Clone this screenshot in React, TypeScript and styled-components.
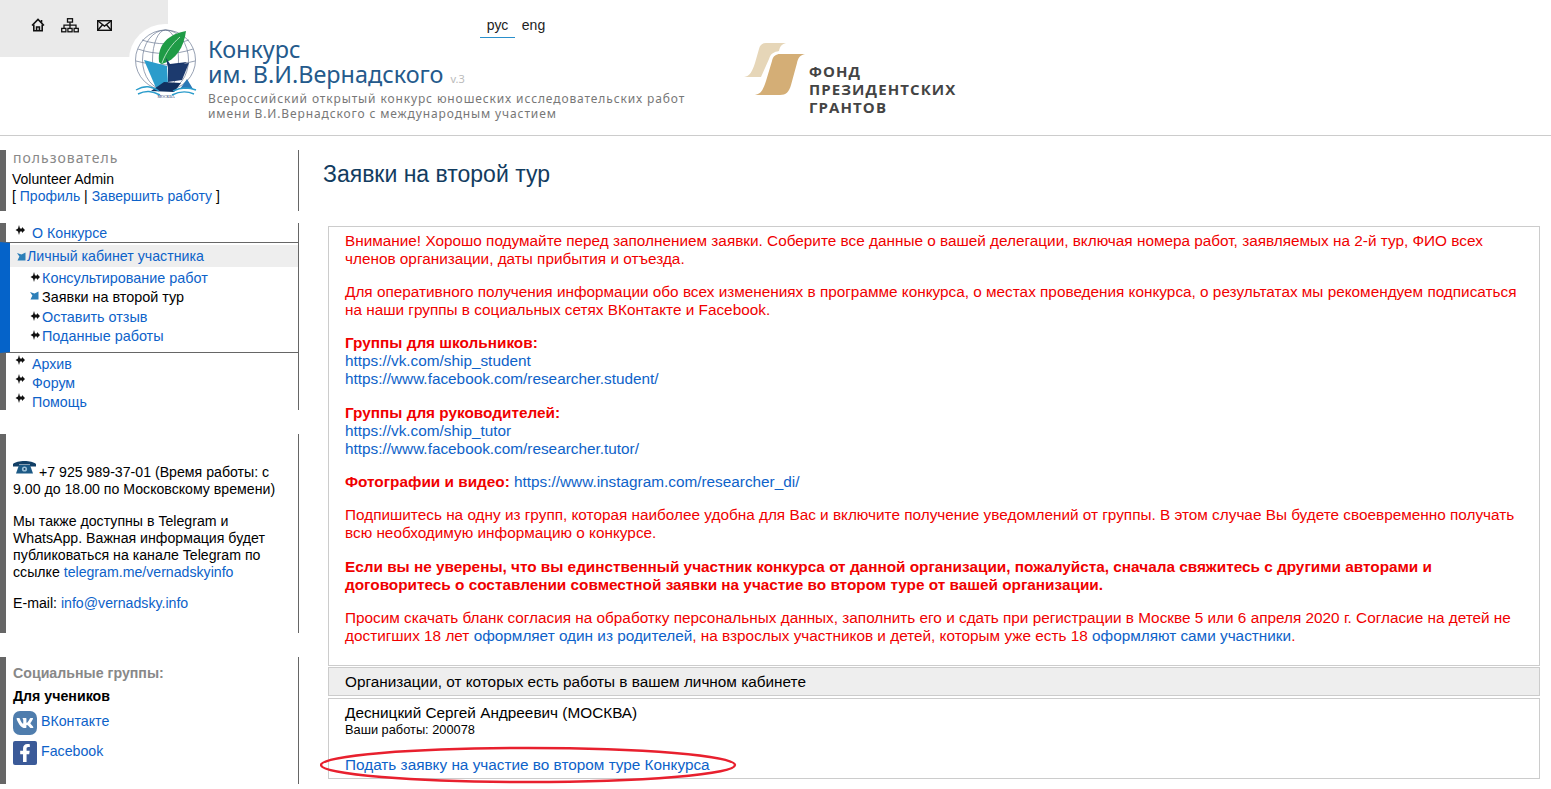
import React from 'react';
import styled, { createGlobalStyle } from 'styled-components';
import { FaVk, FaFacebookF } from 'react-icons/fa';

const link = '#0d62c9';

const GlobalStyle = createGlobalStyle`
  html, body {
    margin: 0;
    padding: 0;
    background: #fff;
    height: 789px;
    overflow: hidden;
    font-family: "Liberation Sans", Arial, sans-serif;
    color: #000;
  }
  a {
    color: ${link};
    text-decoration: none;
  }
`;

const HomeIcon = () => (
  <svg width="14" height="14" viewBox="0 0 14 14" fill="none" stroke="#111" strokeWidth="1.6">
    <path d="M1 7.5 7 1.5l6 6" />
    <path d="M2.8 6.5v6.3h8.4V6.5" />
    <path d="M5.6 12.8V9h2.8v3.8" />
    <path d="M10.5 2v2.6" />
  </svg>
);

const SitemapIcon = () => (
  <svg width="18" height="15" viewBox="0 0 18 15" fill="none" stroke="#111" strokeWidth="1.3">
    <rect x="6.5" y="0.7" width="5" height="3.4" />
    <path d="M9 4.2v3M3 10V7.2h12V10M9 7.2V10" />
    <rect x="0.7" y="10.4" width="4.2" height="3.4" />
    <rect x="6.9" y="10.4" width="4.2" height="3.4" />
    <rect x="13.1" y="10.4" width="4.2" height="3.4" />
  </svg>
);

const MailSvg = styled.svg`
  margin-left: 2px;
`;

const MailIcon = () => (
  <MailSvg width="15" height="11" viewBox="0 0 15 11" fill="none" stroke="#111" strokeWidth="1.4">
    <rect x="0.7" y="0.7" width="13.6" height="9.6" />
    <path d="M1 1l6.5 5L14 1M1 10l4.5-5.2M14 10 9.5 4.8" />
  </MailSvg>
);

const Logo = () => (
  <svg width="66" height="70" viewBox="0 0 66 70">
    <g fill="none" stroke="#6a7892" strokeWidth="0.7">
      <circle cx="31.5" cy="31" r="30" />
      <ellipse cx="31.5" cy="31" rx="13" ry="30" />
      <ellipse cx="31.5" cy="31" rx="23" ry="30" />
      <path d="M4 20c16 6 39 6 55 0M2 32c18 5 41 5 59 0M8 11c14 5 33 5 47 0" />
    </g>
    <path d="M52 2C35 5 23 15 25 33c1 1 2 2 3 2C42 31 50 18 52 2Z" fill="#1f9b46" />
    <path d="M46 8C38 15 32 23 28 34" stroke="#d6f0dc" strokeWidth="0.8" fill="none" />
    <path d="M32 29l4 6 17-2-5 3-14 3Z" fill="#17356a" />
    <path d="M10 31l23 6 1 18-12 4Z" fill="#2b9ccb" />
    <path d="M34 37l21-3-7 17-14 2Z" fill="#1c3a6e" />
    <path d="M17 62l13-9 17 1-7 9Z" fill="#12305f" />
    <path d="M53 50l6 10H46Z" fill="#2b78b5" />
    <path d="M2 61c9-5 15-4 23 1M39 62c8-4 15-4 23-1M4 65c8-4 14-3 22 1M38 66c8-4 15-4 22-1" stroke="#2b9ccb" strokeWidth="1.4" fill="none" />
    <text x="32" y="69" fontSize="4" textAnchor="middle" fill="#17356a" fontFamily="Liberation Serif, serif">
      МОСКВА
    </text>
  </svg>
);

const GrantsMark = () => (
  <svg width="62" height="54" viewBox="0 0 62 54">
    <path d="M0 34C6 33 8 29 11 20L15 6C16 2 18 0 22 0H42C38 1 36 3 35 8C30 9 27 10 25 16L17 34Z" fill="#e6d6b8" />
    <path d="M11 52C17 51 19 47 22 38L28 18C29 13 32 11 36 11H61C56 12 54 15 53 20L47 42C45 49 42 52 36 52Z" fill="#d4ae76" />
  </svg>
);

const Bullet = () => (
  <svg width="10" height="10" viewBox="0 0 10 10">
    <path d="M4 0 5 3.4H7V2L10 5 7 8V6.6H5L4 10 3 6.6 0.5 5 3 3.4Z" fill="#111" />
  </svg>
);

const OpenBullet = () => (
  <svg width="9" height="9" viewBox="0 0 9 9">
    <path d="M0 1 4.5 2.4 8.5 0.5V8.5H0.5L2.4 4.6Z" fill="#2d7fb8" />
  </svg>
);

const PhoneIcon = () => (
  <svg width="23" height="14" viewBox="0 0 23 14">
    <path d="M0 4C4 0 19 0 23 4V6.5H17V4.5H6V6.5H0Z" fill="#123f66" />
    <path d="M6 5H17L20 13.5H3Z" fill="#1d5a86" />
    <circle cx="11.5" cy="9" r="2.6" fill="#9cc0d8" />
    <circle cx="11.5" cy="9" r="1" fill="#123f66" />
  </svg>
);

const Page = styled.div`
  width: 1551px;
  height: 789px;
  overflow: hidden;
`;

const Header = styled.header`
  display: flex;
  height: 135px;
  border-bottom: 1px solid #ccc;
`;

const Toolbar = styled.div`
  display: flex;
  flex: none;
  align-items: center;
  gap: 16px;
  width: 168px;
  height: 57px;
  padding: 0 0 7px 31px;
  box-sizing: border-box;
  background: #eaeaea;
`;

const LogoBadge = styled.div`
  flex: none;
  width: 74px;
  height: 76px;
  margin: 24px 0 0 -39px;
  padding: 5px 0 0 5px;
  box-sizing: border-box;
  background: #fff;
  border-radius: 36px 0 0 0;
`;

const Brand = styled.div`
  flex: none;
  width: 272px;
  padding-top: 37px;
  margin-left: 5px;
`;

const BrandName = styled.div`
  font-family: "Noto Sans", sans-serif;
  font-size: 23.4px;
  line-height: 25px;
  color: #245a8c;
  white-space: nowrap;
`;

const Version = styled.span`
  margin-left: 7px;
  font-size: 11px;
  color: #bbb;
`;

const Tagline = styled.div`
  margin-top: 0;
  font-family: "Noto Sans", sans-serif;
  font-size: 12px;
  line-height: 15px;
  letter-spacing: 0.88px;
  color: #777;
  white-space: nowrap;
`;

const Langs = styled.nav`
  display: flex;
  flex: none;
  align-self: flex-start;
  gap: 1px;
  margin: 14px 0 0 0;
  font-size: 14px;
`;

const Lang = styled.span<{ $active?: boolean }>`
  width: 35px;
  height: 23px;
  line-height: 22px;
  text-align: center;
  color: #222;
  border-bottom: 1px solid ${p => (p.$active ? '#2a8fcb' : 'transparent')};
`;

const Grants = styled.div`
  display: flex;
  flex: none;
  margin: 43px 0 0 193px;
`;

const GrantsName = styled.div`
  margin: 19px 0 0 3px;
  font-family: "Open Sans", sans-serif;
  font-size: 15px;
  font-weight: 700;
  line-height: 18px;
  letter-spacing: 1.1px;
  color: #444;
`;

const Body = styled.div`
  display: flex;
`;

const Sidebar = styled.aside`
  flex: none;
  display: flex;
  flex-direction: column;
  gap: 12px;
  width: 299px;
  padding-top: 14px;
  font-size: 14.2px;
`;

const Block = styled.section`
  box-sizing: border-box;
  border-left: 6px solid #666;
  border-right: 1px solid #666;
`;

const UserBlock = styled(Block)`
  height: 61px;
  padding: 0 0 0 6px;
  font-size: 14px;
  line-height: 17px;
`;

const BlockTitle = styled.div`
  padding: 0 0 6px 1px;
  font-family: "Noto Sans", sans-serif;
  font-size: 14px;
  line-height: 15px;
  letter-spacing: 1px;
  color: #888;
`;

const Menu = styled.nav`
  width: 299px;
  box-sizing: border-box;
`;

const TopItems = styled(Block)`
  height: 19px;
  padding: 0 0 0 9px;
  line-height: 20px;
`;

const LowerItems = styled(Block)`
  height: 57px;
  padding: 3px 0 0 9px;
`;

const Item = styled.div`
  display: flex;
  align-items: flex-start;
  height: 19px;
  line-height: inherit;
  gap: 7px;
`;

const BulletSlot = styled.span<{ $nudge?: number }>`
  display: flex;
  flex: none;
  width: 10px;
  margin-top: ${p => p.$nudge ?? 2}px;
`;

const OpenGroup = styled.div`
  border-top: 1px solid #666;
  border-bottom: 1px solid #666;
  border-right: 1px solid #666;
  border-left: 10px solid #0563c9;
  padding: 2px 0 0 0;
  height: 111px;
  box-sizing: border-box;
`;

const OpenHead = styled.div`
  display: flex;
  align-items: center;
  gap: 1px;
  height: 22px;
  padding-left: 7px;
  background: #eeeeee;
`;

const SubItems = styled.div`
  padding: 2px 0 0 20px;
  font-size: 14.4px;
  line-height: 19px;
`;

const SubItem = styled(Item)<{ $tall?: boolean }>`
  gap: 2px;
  height: ${p => (p.$tall ? 20 : 19)}px;
`;

const ContactBlock = styled(Block)`
  height: 199px;
  margin-top: 12px;
  padding: 26px 8px 0 7px;
  font-size: 14.15px;
  line-height: 17px;
`;

const Para = styled.p<{ $after?: number }>`
  margin: 0 0 ${p => p.$after ?? 15}px;
`;

const PhoneSlot = styled.span`
  display: inline-block;
  margin-right: 3px;
  vertical-align: 3px;
`;

const SocialBlock = styled(Block)`
  height: 127px;
  margin-top: 12px;
  padding: 7px 0 0 7px;
`;

const SocialTitle = styled.div`
  font-weight: 700;
  line-height: 18px;
  color: #888;
`;

const SocialSub = styled.div`
  margin-top: 5px;
  font-weight: 700;
  line-height: 18px;
`;

const SocialRow = styled.div`
  display: flex;
  align-items: flex-start;
  gap: 4px;
  height: 24px;
  margin-top: 6px;
  line-height: 20px;
`;

const SocialIcon = styled.span<{ $bg: string; $round: number }>`
  display: flex;
  flex: none;
  align-items: center;
  justify-content: center;
  width: 24px;
  height: 24px;
  color: #fff;
  background: ${p => p.$bg};
  border-radius: ${p => p.$round}px;
`;

const Main = styled.main`
  flex: none;
  width: 1212px;
  margin-left: 29px;
  font-size: 15.33px;
  line-height: 18px;
`;

const Title = styled.h1`
  margin: 23px 0 37px -5px;
  font-size: 23px;
  font-weight: 400;
  line-height: 30px;
  color: #123c60;
`;

const Notice = styled.div`
  height: 440px;
  box-sizing: border-box;
  padding: 5px 16px 0;
  border: 1px solid #ccc;
  color: #f00000;
`;

const NoticePara = styled.p<{ $after?: number }>`
  margin: 0 0 ${p => p.$after ?? 15}px;
`;

const LinkLine = styled.a`
  display: block;
`;

const Strong = styled.b`
  font-weight: 700;
`;

const Bar = styled.div`
  height: 29px;
  line-height: 28px;
  box-sizing: border-box;
  padding-left: 16px;
  margin-top: 1px;
  background: #eee;
  border: 1px solid #ccc;
`;

const Card = styled.div`
  position: relative;
  height: 81px;
  box-sizing: border-box;
  margin-top: 2px;
  padding: 5px 16px 0;
  border: 1px solid #ccc;
`;

const Small = styled.div`
  margin: 0 0 19px;
  font-size: 12.8px;
  line-height: 15px;
`;

const Ellipse = styled.svg`
  position: absolute;
  left: -9px;
  top: 47px;
`;

export default function App() {
  return (
    <Page>
      <GlobalStyle />
      <Header>
        <Toolbar>
          <HomeIcon />
          <SitemapIcon />
          <MailIcon />
        </Toolbar>
        <LogoBadge>
          <Logo />
        </LogoBadge>
        <Brand>
          <BrandName>Конкурс</BrandName>
          <BrandName>
            им. В.И.Вернадского<Version>v.3</Version>
          </BrandName>
          <Tagline>
            Всероссийский открытый конкурс юношеских исследовательских работ
            <br />
            имени В.И.Вернадского с международным участием
          </Tagline>
        </Brand>
        <Langs>
          <Lang $active>рус</Lang>
          <Lang>eng</Lang>
        </Langs>
        <Grants>
          <GrantsMark />
          <GrantsName>
            ФОНД
            <br />
            ПРЕЗИДЕНТСКИХ
            <br />
            ГРАНТОВ
          </GrantsName>
        </Grants>
      </Header>
      <Body>
        <Sidebar>
          <UserBlock>
            <BlockTitle>пользователь</BlockTitle>
            Volunteer Admin
            <br />[ <a href="#">Профиль</a> | <a href="#">Завершить работу</a> ]
          </UserBlock>
          <Menu>
            <TopItems>
              <Item>
                <BulletSlot>
                  <Bullet />
                </BulletSlot>
                <a href="#">О Конкурсе</a>
              </Item>
            </TopItems>
            <OpenGroup>
              <OpenHead>
                <OpenBullet />
                <a href="#">Личный кабинет участника</a>
              </OpenHead>
              <SubItems>
                <SubItem>
                  <BulletSlot $nudge={3}>
                    <Bullet />
                  </BulletSlot>
                  <a href="#">Консультирование работ</a>
                </SubItem>
                <SubItem $tall>
                  <BulletSlot $nudge={3}>
                    <OpenBullet />
                  </BulletSlot>
                  Заявки на второй тур
                </SubItem>
                <SubItem>
                  <BulletSlot $nudge={3}>
                    <Bullet />
                  </BulletSlot>
                  <a href="#">Оставить отзыв</a>
                </SubItem>
                <SubItem>
                  <BulletSlot $nudge={3}>
                    <Bullet />
                  </BulletSlot>
                  <a href="#">Поданные работы</a>
                </SubItem>
              </SubItems>
            </OpenGroup>
            <LowerItems>
              {['Архив', 'Форум', 'Помощь'].map(name => (
                <Item key={name}>
                  <BulletSlot $nudge={-1}>
                    <Bullet />
                  </BulletSlot>
                  <a href="#">{name}</a>
                </Item>
              ))}
            </LowerItems>
          </Menu>
          <ContactBlock>
            <Para>
              <PhoneSlot>
                <PhoneIcon />
              </PhoneSlot>
              +7 925 989-37-01 (Время работы: с 9.00 до 18.00 по Московскому времени)
            </Para>
            <Para $after={14}>
              Мы также доступны в Telegram и WhatsApp. Важная информация будет публиковаться на
              канале Telegram по ссылке <a href="#">telegram.me/vernadskyinfo</a>
            </Para>
            <Para>
              E-mail: <a href="#">info@vernadsky.info</a>
            </Para>
          </ContactBlock>
          <SocialBlock>
            <SocialTitle>Социальные группы:</SocialTitle>
            <SocialSub>Для учеников</SocialSub>
            <SocialRow>
              <SocialIcon $bg="#4f7dad" $round={7}>
                <FaVk size={18} />
              </SocialIcon>
              <a href="#">ВКонтакте</a>
            </SocialRow>
            <SocialRow>
              <SocialIcon $bg="#3b5a98" $round={2}>
                <FaFacebookF size={18} />
              </SocialIcon>
              <a href="#">Facebook</a>
            </SocialRow>
          </SocialBlock>
        </Sidebar>
        <Main>
          <Title>Заявки на второй тур</Title>
          <Notice>
            <NoticePara>
              Внимание! Хорошо подумайте перед заполнением заявки. Соберите все данные о вашей
              делегации, включая номера работ, заявляемых на 2-й тур, ФИО всех членов организации,
              даты прибытия и отъезда.
            </NoticePara>
            <NoticePara>
              Для оперативного получения информации обо всех изменениях в программе конкурса, о
              местах проведения конкурса, о результатах мы рекомендуем подписаться на наши группы в
              социальных сетях ВКонтакте и Facebook.
            </NoticePara>
            <NoticePara $after={16}>
              <Strong>Группы для школьников:</Strong>
              <LinkLine href="#">https://vk.com/ship_student</LinkLine>
              <LinkLine href="#">https://www.facebook.com/researcher.student/</LinkLine>
            </NoticePara>
            <NoticePara>
              <Strong>Группы для руководителей:</Strong>
              <LinkLine href="#">https://vk.com/ship_tutor</LinkLine>
              <LinkLine href="#">https://www.facebook.com/researcher.tutor/</LinkLine>
            </NoticePara>
            <NoticePara>
              <Strong>Фотографии и видео:</Strong>{' '}
              <a href="#">https://www.instagram.com/researcher_di/</a>
            </NoticePara>
            <NoticePara $after={16}>
              Подпишитесь на одну из групп, которая наиболее удобна для Вас и включите получение
              уведомлений от группы. В этом случае Вы будете своевременно получать всю необходимую
              информацию о конкурсе.
            </NoticePara>
            <NoticePara>
              <Strong>
                Если вы не уверены, что вы единственный участник конкурса от данной организации,
                пожалуйста, сначала свяжитесь с другими авторами и договоритесь о составлении
                совместной заявки на участие во втором туре от вашей организации.
              </Strong>
            </NoticePara>
            <NoticePara>
              Просим скачать бланк согласия на обработку персональных данных, заполнить его и сдать
              при регистрации в Москве 5 или 6 апреля 2020 г. Согласие на детей не достигших 18 лет{' '}
              <a href="#">оформляет один из родителей</a>, на взрослых участников и детей, которым
              уже есть 18 <a href="#">оформляют сами участники</a>.
            </NoticePara>
          </Notice>
          <Bar>Организации, от которых есть работы в вашем личном кабинете</Bar>
          <Card>
            Десницкий Сергей Андреевич (МОСКВА)
            <Small>Ваши работы: 200078</Small>
            <a href="#">Подать заявку на участие во втором туре Конкурса</a>
            <Ellipse width="420" height="38" viewBox="0 0 420 38">
              <ellipse cx="208" cy="19" rx="207" ry="17" fill="none" stroke="#e8202e" strokeWidth="2.4" />
            </Ellipse>
          </Card>
        </Main>
      </Body>
    </Page>
  );
}
